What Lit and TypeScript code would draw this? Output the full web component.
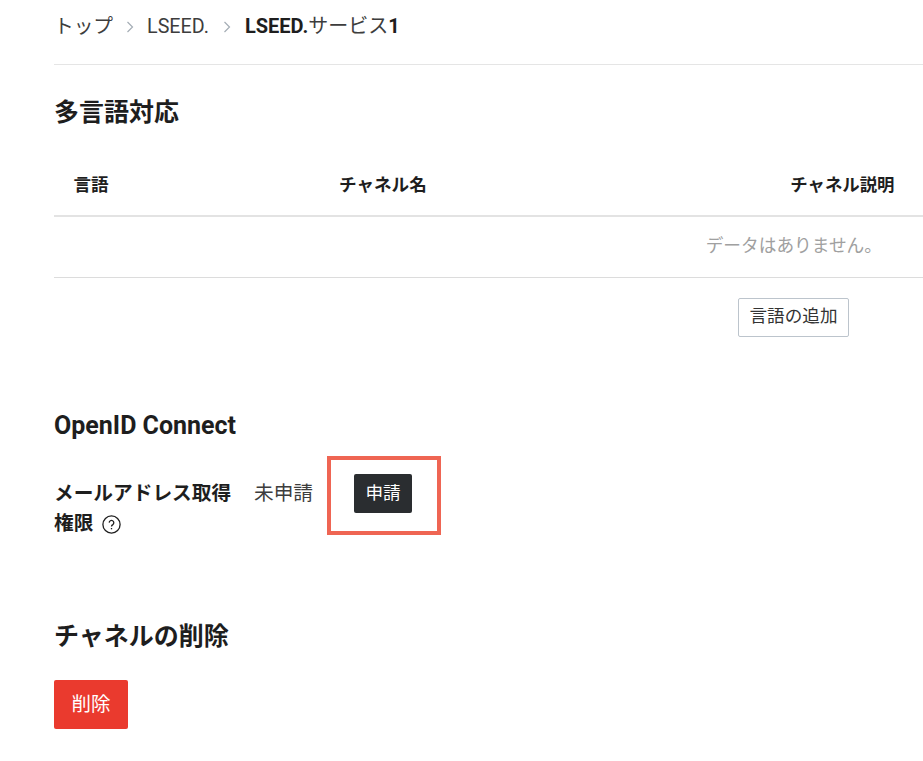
import { LitElement, html, css } from "lit";
import { customElement } from "lit/decorators.js";

@customElement("app-root")
export class AppRoot extends LitElement {
  static styles = css`
    :host {
      display: block;
      height: 761px;
      overflow: hidden;
      background: #fff;
      color: #1e1e1e;
      font-family: Roboto, "Noto Sans CJK JP", sans-serif;
    }
    .page { padding-left: 54px; display: flex; flex-direction: column; }
    .crumbs {
      height: 65px;
      box-sizing: border-box;
      padding-top: 13px;
      border-bottom: 1px solid #e5e5e5;
      display: flex;
      align-items: flex-start;
      font-size: 19.7px;
      line-height: 27px;
      color: #3d3d3d;
    }
    .crumbs svg { margin: 8px 13px 0 14px; }
    .crumbs svg:first-of-type { margin-left: 13px; margin-right: 12px; }
    .crumbs b { color: #1e1e1e; font-weight: 700; font-size: 20px; }
    .crumbs b span { font-weight: 400; color: #3d3d3d; }
    h2 { margin: 0; font-size: 25px; line-height: 32px; font-weight: 700; color: #1e1e1e; }
    .h1 { margin-top: 32px; }
    .table { margin-top: 42px; }
    .head {
      height: 44px;
      border-bottom: 2px solid #e3e3e3;
      display: grid;
      grid-template-columns: 285px 1fr auto;
      font-size: 17.6px;
      line-height: 28px;
      font-weight: 700;
      white-space: nowrap;
    }
    .head div:first-child { padding-left: 19.5px; }
    .head div:last-child { text-align: right; padding-right: 28.5px; font-size: 17.4px; }
    .empty {
      height: 61px;
      border-bottom: 1px solid #dcdcdc;
      box-sizing: border-box;
      text-align: right;
      padding: 15px 41px 0 0;
      font-size: 17.7px;
      line-height: 28px;
      color: #a0a0a0;
    }
    .actions { display: flex; justify-content: flex-end; padding: 20px 74px 0 0; }
    .add {
      width: 111px;
      height: 39px;
      padding: 0 0 2px;
      box-sizing: border-box;
      border: 1px solid #bcc4cc;
      border-radius: 2px;
      background: #fff;
      color: #333;
      font: 400 17.6px/1 Roboto, "Noto Sans CJK JP", sans-serif;
    }
    .h2 { margin-top: 73px; }
    .row { display: flex; align-items: flex-start; margin-top: 14px; }
    .label {
      width: 200px;
      box-sizing: border-box;
      padding-right: 20px;
      font-size: 19.7px;
      line-height: 30px;
      font-weight: 700;
      margin-top: 23px;
    }
    .label svg { vertical-align: -4px; margin-left: 9px; }
    .status { font-size: 19.7px; line-height: 30px; color: #3d3d3d; margin-top: 23px; }
    .box {
      margin-left: 14px;
      width: 114px;
      height: 79px;
      box-sizing: border-box;
      border: 4px solid #ef6553;
      display: flex;
      justify-content: center;
      padding: 14px 2px 0 0;
    }
    .apply {
      width: 58px;
      height: 39px;
      padding: 0;
      border: none;
      border-radius: 2px;
      background: #2a2d30;
      color: #fff;
      font: 400 17.6px/1 Roboto, "Noto Sans CJK JP", sans-serif;
    }
    .h3 { margin-top: 82px; }
    .del {
      margin-top: 27px;
      align-self: flex-start;
      width: 74px;
      height: 49px;
      padding: 0;
      border: none;
      border-radius: 2px;
      background: #ea3a2e;
      color: #fff;
      font: 400 19.5px/1 Roboto, "Noto Sans CJK JP", sans-serif;
    }
  `;

  private chev() {
    return html`<svg width="9" height="12" viewBox="0 0 9 12" fill="none" stroke="#a4adb5" stroke-width="1.2"><path d="M1.5 1l5 5-5 5"/></svg>`;
  }

  render() {
    return html`<div class="page">
      <nav class="crumbs">
        <span>トップ</span>${this.chev()}<span>LSEED.</span>${this.chev()}<b>LSEED.<span>サービス</span>1</b>
      </nav>
      <h2 class="h1">多言語対応</h2>
      <div class="table">
        <div class="head"><div>言語</div><div>チャネル名</div><div>チャネル説明</div></div>
        <div class="empty">データはありません。</div>
      </div>
      <div class="actions"><button class="add">言語の追加</button></div>
      <h2 class="h2">OpenID Connect</h2>
      <div class="row">
        <div class="label">メールアドレス取得権限<svg width="19" height="19" viewBox="0 0 19 19" fill="none" stroke="#1e1e1e" stroke-width="1.3"><circle cx="9.5" cy="9.5" r="8.6"/><path d="M7.2 7.6a2.3 2.3 0 1 1 3.6 2c-.8.5-1.3 1-1.3 1.9"/><path d="M9.5 13v1.3"/></svg></div>
        <div class="status">未申請</div>
        <div class="box"><button class="apply">申請</button></div>
      </div>
      <h2 class="h3">チャネルの削除</h2>
      <button class="del">削除</button>
    </div>`;
  }
}
